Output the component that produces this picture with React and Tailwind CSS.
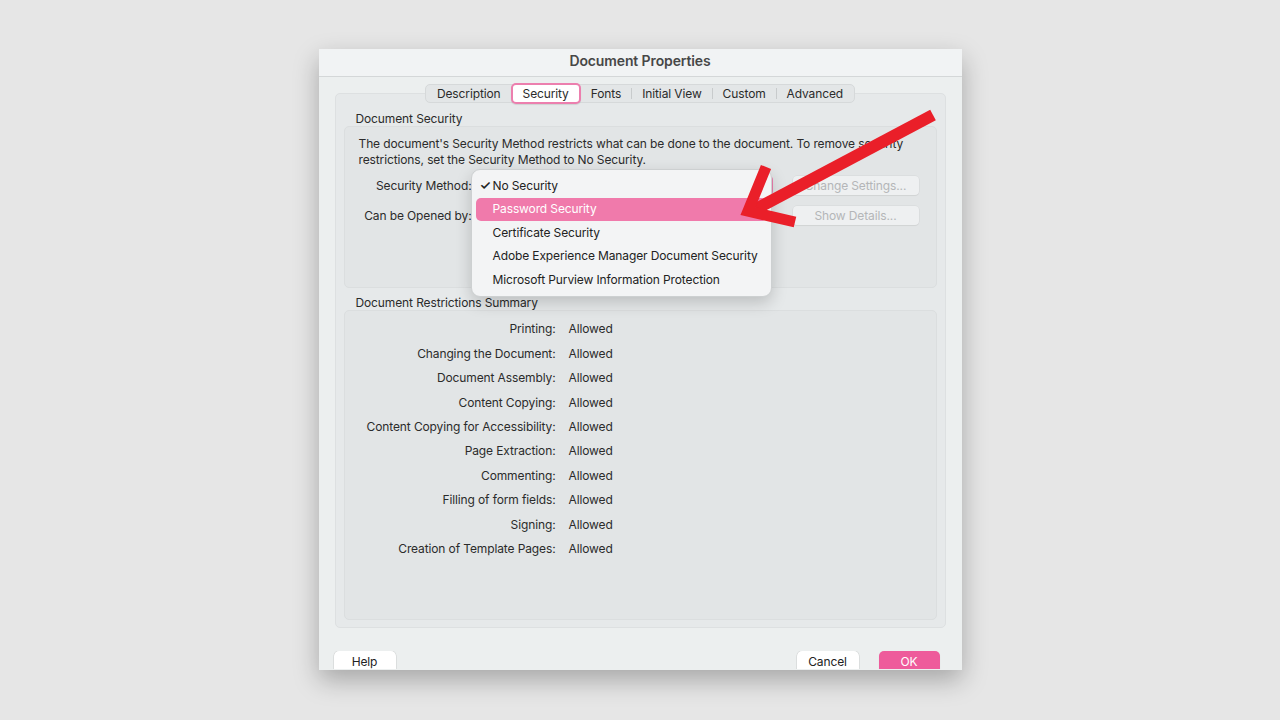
const tabs = ['Description', 'Security', 'Fonts', 'Initial View', 'Custom', 'Advanced']

const restrictions = [
  'Printing',
  'Changing the Document',
  'Document Assembly',
  'Content Copying',
  'Content Copying for Accessibility',
  'Page Extraction',
  'Commenting',
  'Filling of form fields',
  'Signing',
  'Creation of Template Pages',
]

const methods = [
  'No Security',
  'Password Security',
  'Certificate Security',
  'Adobe Experience Manager Document Security',
  'Microsoft Purview Information Protection',
]

const btnCls =
  'h-[22px] w-[62px] rounded-[5px] bg-white text-[12px] text-[#222] shadow-[0_0_0_0.5px_rgba(0,0,0,0.12),0_1px_1px_rgba(0,0,0,0.12)]'
const disabledBtnCls =
  'h-[19px] w-[126px] rounded-[4px] bg-[#eef0f1] text-[12px] text-[#b4b6b8] shadow-[0_0_0_0.5px_rgba(0,0,0,0.06),0_1px_1px_rgba(0,0,0,0.05)]'

function Tabs() {
  return (
    <div className="relative z-10 -mt-[10px] flex justify-center">
      <div className="flex h-[19px] items-center rounded-[5px] border border-[#d6d9da] bg-[#e3e6e7] px-[1px] text-[12px] text-[#2b2b2b]">
        {tabs.map((t, i) => {
          const selected = t === 'Security'
          const nextSelected = tabs[i + 1] === 'Security'
          return (
            <div key={t} className="flex items-center">
              {selected ? (
                <div className="-my-[2px] flex h-[21px] items-center rounded-[5px] border-2 border-[#ec7fae] bg-white px-[10px] shadow-[0_1px_1px_rgba(0,0,0,0.1)]">
                  {t}
                </div>
              ) : (
                <div className="px-[10px]">{t}</div>
              )}
              {i < tabs.length - 1 && !selected && !nextSelected && (
                <div className="h-[11px] w-px bg-[#c8cbcc]" />
              )}
            </div>
          )
        })}
      </div>
    </div>
  )
}

function Dropdown() {
  return (
    <div className="absolute left-[152px] top-[120px] z-20 w-[301px] rounded-[9px] border border-[#cdd0d1] bg-[#f3f4f5] px-[4px] py-[4px] text-[12px] text-[#222] shadow-[0_6px_16px_rgba(0,0,0,0.18)]">
      {methods.map((m, i) => (
        <div
          key={m}
          className={
            'flex h-[23.5px] items-center rounded-[5px] ' +
            (i === 1 ? 'bg-[#f07aab] text-white' : '')
          }
        >
          <span className="w-[17px] pl-[4px] text-[13px] font-semibold">{i === 0 ? '✓' : ''}</span>
          <span>{m}</span>
        </div>
      ))}
    </div>
  )
}

function Arrow() {
  return (
    <svg className="pointer-events-none absolute left-0 top-0 z-30" width="1280" height="720">
      <g stroke="#ea1f29" fill="none">
        <line x1="933" y1="115" x2="756" y2="209" strokeWidth="12" />
        <polyline points="766,167 748,211 795,222" strokeWidth="11" strokeLinejoin="miter" strokeMiterlimit="10" />
      </g>
    </svg>
  )
}

export default function App() {
  return (
    <div
      className="relative flex h-[720px] w-[1280px] justify-center bg-[#e6e6e6] pt-[49px] tracking-[-0.12px]"
      style={{ fontFamily: 'Inter, "Liberation Sans", sans-serif' }}
    >
      <div className="relative flex h-[621px] w-[643px] flex-col bg-[#ecefef] shadow-[0_10px_24px_rgba(0,0,0,0.28)]">
        <div className="h-[28px] border-b border-[#d4d7d8] bg-[#f1f3f4] text-center text-[14px] font-semibold leading-[24px] text-[#474747]">
          Document Properties
        </div>

        <div className="px-[16px] pt-[16px]">
          <div className="h-[535px] rounded-[5px] border border-[#dde0e1] bg-[#e6e9ea] px-[8px]">
            <Tabs />

            <div className="mt-[8px] pl-[12px] text-[12px] leading-[15px] text-[#2b2b2b]">Document Security</div>
            <div className="h-[162px] rounded-[5px] border border-[#dbdedf] bg-[#e2e5e6] pl-[14px] pt-[9px] text-[12px] text-[#2b2b2b]">
              <p className="leading-[16px]">
                The document's Security Method restricts what can be done to the document. To remove security
                <br />
                restrictions, set the Security Method to No Security.
              </p>
              <div className="mt-[8px] flex items-center">
                <div className="w-[113px] text-right">Security Method:</div>
                <div className="ml-[1px] h-[19px] w-[300px] rounded-[4px] border-2 border-[#ec7fae] bg-white" />
                <div className="ml-[20px] flex">
                  <button className={disabledBtnCls}>Change Settings...</button>
                </div>
              </div>
              <div className="mt-[11px] flex items-center">
                <div className="w-[113px] text-right">Can be Opened by:</div>
                <div className="ml-[321px]">
                  <button className={disabledBtnCls}>Show Details...</button>
                </div>
              </div>
            </div>

            <div className="mt-[7px] pl-[12px] text-[12px] leading-[15px] text-[#2b2b2b]">Document Restrictions Summary</div>
            <div className="h-[310px] rounded-[5px] border border-[#dbdedf] bg-[#e2e5e6] pt-[6px] text-[12px] text-[#2b2b2b]">
              {restrictions.map((r) => (
                <div key={r} className="flex h-[24.45px] items-center">
                  <div className="w-[211px] text-right">{r}:</div>
                  <div className="ml-[13px]">Allowed</div>
                </div>
              ))}
            </div>
          </div>
        </div>

        <div className="mt-[23px] flex h-[18px] items-start overflow-hidden pl-[15px] pr-[22px]">
          <button className={btnCls}>Help</button>
          <div className="flex-1" />
          <button className={btnCls}>Cancel</button>
          <button className="ml-[20px] h-[22px] w-[61px] rounded-[5px] bg-[#ee5b9b] text-[12px] text-white shadow-[0_1px_1px_rgba(0,0,0,0.12)]">
            OK
          </button>
        </div>

        <Dropdown />
      </div>
      <Arrow />
    </div>
  )
}
